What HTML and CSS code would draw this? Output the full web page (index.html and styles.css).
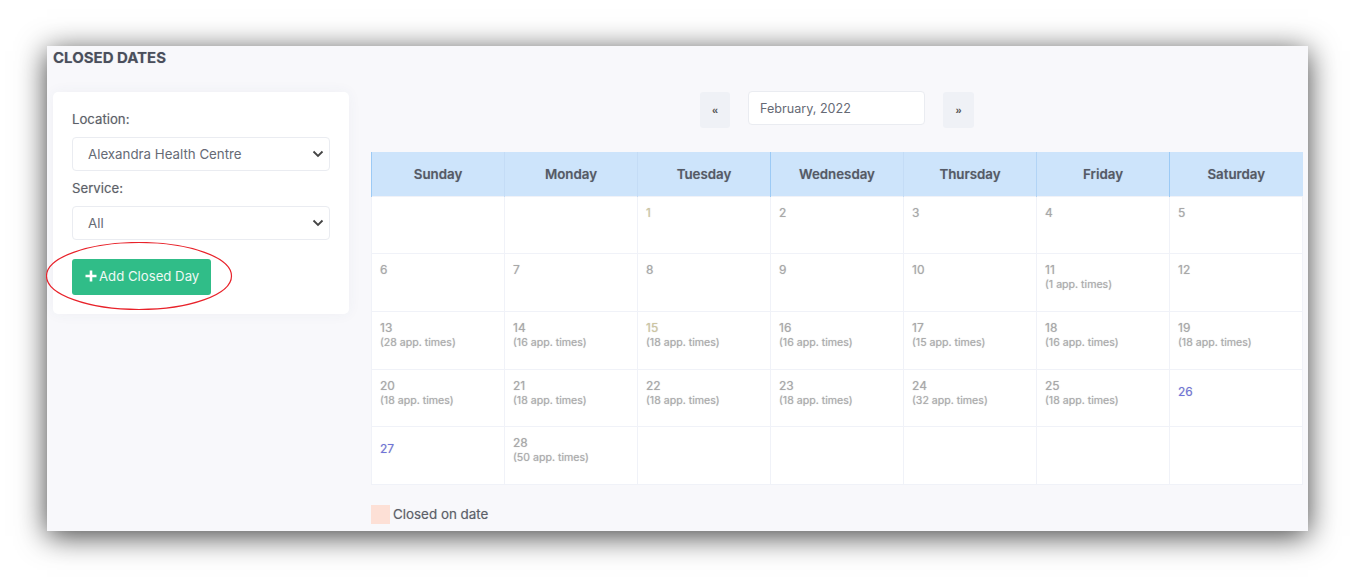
FILE: index.html
```html
<!DOCTYPE html>
<html lang="en">
<head>
    <meta charset="UTF-8">
    <meta name="viewport" content="width=device-width, initial-scale=1.0">
    <title>Closed Dates</title>
    <link rel="stylesheet" href="styles.css">
</head>
<body>
    <div class="frame">
        <h1 class="page-title">CLOSED DATES</h1>

        <div class="columns">
            <aside class="filter-card">
                <label class="field-label" for="location">Location:</label>
                <div class="select-wrap">
                    <select id="location" class="field-select">
                        <option>Alexandra Health Centre</option>
                    </select>
                    <svg class="chevron" width="12" height="8" viewBox="0 0 12 8"><path d="M1.5 1.5 6 6l4.5-4.5" fill="none" stroke="#444" stroke-width="1.8"/></svg>
                </div>
                <label class="field-label" for="service">Service:</label>
                <div class="select-wrap">
                    <select id="service" class="field-select">
                        <option>All</option>
                    </select>
                    <svg class="chevron" width="12" height="8" viewBox="0 0 12 8"><path d="M1.5 1.5 6 6l4.5-4.5" fill="none" stroke="#444" stroke-width="1.8"/></svg>
                </div>
                <button class="add-btn" type="button">
                    <svg width="12" height="12" viewBox="0 0 12 12"><path d="M6 .5v11M.5 6h11" stroke="#fff" stroke-width="2.6" fill="none"/></svg>
                    Add Closed Day
                </button>
            </aside>

            <main class="calendar">
                <div class="month-nav">
                    <button class="nav-btn" type="button">«</button>
                    <input class="month-input" type="text" value="February, 2022">
                    <button class="nav-btn nav-btn-next" type="button">»</button>
                </div>

                <table class="month-table">
                    <thead>
                        <tr>
                            <th class="edge">Sunday</th>
                            <th>Monday</th>
                            <th>Tuesday</th>
                            <th class="edge">Wednesday</th>
                            <th>Thursday</th>
                            <th class="edge-soft">Friday</th>
                            <th class="edge">Saturday</th>
                        </tr>
                    </thead>
                    <tbody>
                        <tr>
                            <td></td>
                            <td></td>
                            <td><span class="day day-tan">1</span></td>
                            <td><span class="day">2</span></td>
                            <td><span class="day">3</span></td>
                            <td><span class="day">4</span></td>
                            <td><span class="day">5</span></td>
                        </tr>
                        <tr>
                            <td><span class="day">6</span></td>
                            <td><span class="day">7</span></td>
                            <td><span class="day">8</span></td>
                            <td><span class="day">9</span></td>
                            <td><span class="day">10</span></td>
                            <td><span class="day">11</span><span class="times">(1 app. times)</span></td>
                            <td><span class="day">12</span></td>
                        </tr>
                        <tr>
                            <td><span class="day">13</span><span class="times">(28 app. times)</span></td>
                            <td><span class="day">14</span><span class="times">(16 app. times)</span></td>
                            <td><span class="day day-tan">15</span><span class="times">(18 app. times)</span></td>
                            <td><span class="day">16</span><span class="times">(16 app. times)</span></td>
                            <td><span class="day">17</span><span class="times">(15 app. times)</span></td>
                            <td><span class="day">18</span><span class="times">(16 app. times)</span></td>
                            <td><span class="day">19</span><span class="times">(18 app. times)</span></td>
                        </tr>
                        <tr>
                            <td><span class="day">20</span><span class="times">(18 app. times)</span></td>
                            <td><span class="day">21</span><span class="times">(18 app. times)</span></td>
                            <td><span class="day">22</span><span class="times">(18 app. times)</span></td>
                            <td><span class="day">23</span><span class="times">(18 app. times)</span></td>
                            <td><span class="day">24</span><span class="times">(32 app. times)</span></td>
                            <td><span class="day">25</span><span class="times">(18 app. times)</span></td>
                            <td><a class="day day-link" href="#">26</a></td>
                        </tr>
                        <tr>
                            <td><a class="day day-link" href="#">27</a></td>
                            <td><span class="day">28</span><span class="times">(50 app. times)</span></td>
                            <td></td>
                            <td></td>
                            <td></td>
                            <td></td>
                            <td></td>
                        </tr>
                    </tbody>
                </table>

                <div class="legend">
                    <span class="legend-swatch"></span>
                    <span>Closed on date</span>
                </div>
            </main>
        </div>

        <!-- red marker drawn over the screenshot -->
        <svg class="highlight" width="188" height="70" viewBox="0 0 188 70">
            <ellipse cx="93" cy="34" rx="92.5" ry="33.5" fill="none" stroke="#e8222a" stroke-width="1.2"/>
        </svg>
    </div>
</body>
</html>
```
FILE: styles.css
```css
* {
    box-sizing: border-box;
}

html, body {
    height: 100%;
}

body {
    margin: 0;
    padding: 46px 46px 46px 47px;
    overflow: hidden;
    background: #fff;
    font-family: 'Inter', 'Noto Sans', sans-serif;
    color: #555;
}

.frame {
    position: relative;
    width: 1261px;
    height: 485px;
    padding: 0 5px 0 6px;
    background: #f8f8fb;
    box-shadow: 0 5px 28px rgba(0,0,0,0.75);
    text-shadow: 0 0 1px rgba(110,110,120,0.4);
}

.page-title {
    margin: 0;
    height: 24px;
    line-height: 24px;
    font-size: 15px;
    font-weight: 700;
    color: #4a4f5c;
}

.columns {
    display: flex;
    gap: 22px;
    margin-top: 21px;
    align-items: flex-start;
}

.filter-card {
    width: 296px;
    margin-top: 1px;
    padding: 19px 19px 19px;
    background: #fff;
    border-radius: 5px;
    box-shadow: 0 0 14px rgba(60,70,110,0.05);
}

.field-label {
    display: block;
    height: 18px;
    line-height: 16px;
    margin-bottom: 8px;
    font-size: 13.2px;
    color: #5c5f68;
}

.select-wrap {
    position: relative;
    margin-bottom: 9px;
}

.field-select {
    display: block;
    width: 100%;
    height: 34px;
    padding: 0 30px 0 15px;
    border: 1px solid #eaecf1;
    border-radius: 4px;
    background: #fff;
    appearance: none;
    font-family: inherit;
    font-size: 13.3px;
    color: #666a75;
}

.chevron {
    position: absolute;
    right: 6px;
    top: 13px;
    pointer-events: none;
}

.add-btn {
    display: flex;
    align-items: center;
    gap: 2px;
    height: 36px;
    width: 139px;
    margin-top: 19px;
    padding: 0 0 2px 13px;
    border: none;
    border-radius: 3px;
    background: #30bd88;
    color: #eef9f4;
    font-family: inherit;
    font-size: 13.2px;
}

.calendar {
    width: 932px;
}

.month-nav {
    display: flex;
    justify-content: center;
    align-items: flex-start;
    gap: 18px;
    height: 36px;
    margin-bottom: 25px;
}

.nav-btn {
    width: 30px;
    height: 36px;
    margin-top: 1px;
    padding: 0;
    border: none;
    border-radius: 3px;
    background: #eff1f6;
    color: #555;
    font-size: 11px;
    font-weight: 700;
}

.nav-btn-next {
    width: 31px;
}

.month-input {
    width: 177px;
    height: 34px;
    padding: 0 11px;
    border: 1px solid #eaecf1;
    border-radius: 4px;
    background: #fff;
    font-family: inherit;
    font-size: 12.6px;
    color: #666a75;
}

.month-table {
    width: 932px;
    table-layout: fixed;
    border-collapse: collapse;
    background: #fff;
}

.month-table th {
    height: 44px;
    padding: 0;
    background: #cde4fb;
    border-left: 1px solid #c4dcf6;
    font-size: 13.3px;
    font-weight: 600;
    color: #555a66;
}

.month-table th.edge {
    border-left-color: #9ccaf5;
}

.month-table th.edge-soft {
    border-left-color: #b2d4f6;
}

.month-table td {
    height: 57.7px;
    padding: 8px 8px 0;
    border: 1px solid #f0f2f8;
    vertical-align: top;
}

.day {
    display: block;
    height: 16px;
    line-height: 16px;
    font-size: 12px;
    color: #a8a8a8;
}

.day-tan {
    color: #cfc6a0;
}

.day-link {
    margin-top: 6px;
    color: #6f74da;
    text-decoration: none;
}

.times {
    display: block;
    height: 14px;
    line-height: 14px;
    font-size: 10.6px;
    color: #ababab;
}

.legend {
    display: flex;
    align-items: center;
    gap: 3px;
    margin-top: 20px;
    font-size: 13.4px;
    color: #5c5f68;
}

.legend-swatch {
    width: 19px;
    height: 19px;
    background: #fde0d6;
}

.highlight {
    position: absolute;
    left: -1px;
    top: 196px;
}
```
